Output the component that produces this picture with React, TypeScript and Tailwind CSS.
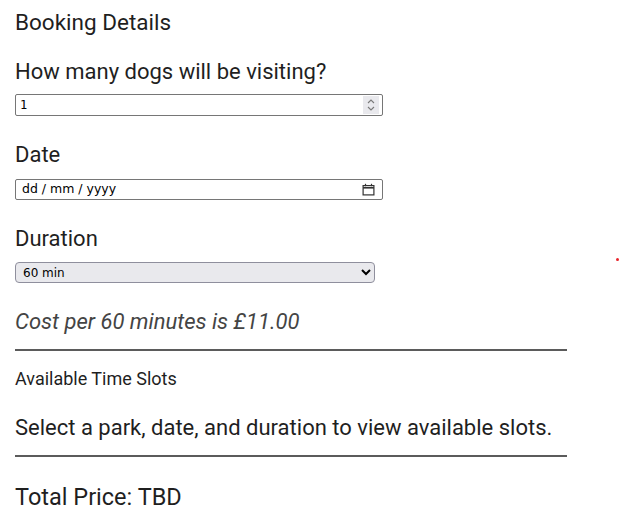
import React from "react";

function CalendarIcon() {
  return (
    <svg width="13" height="13" viewBox="0 0 13 13" fill="none" stroke="#333" strokeWidth="1.2">
      <rect x="1.1" y="2.6" width="10.8" height="9.3" />
      <line x1="1.1" y1="4.8" x2="11.9" y2="4.8" strokeWidth="1.6" />
      <line x1="3.5" y1="0.8" x2="3.5" y2="3.2" />
      <line x1="9.5" y1="0.8" x2="9.5" y2="3.2" />
    </svg>
  );
}

function Spinner() {
  return (
    <div className="pointer-events-none absolute right-[4px] top-[2px] flex h-[18px] w-[16px] items-center justify-center bg-[#e9e9ed]">
      <svg width="10" height="16" viewBox="0 0 10 16" fill="none" stroke="#7a7a7a" strokeWidth="1.1">
        <path d="M2 6 L5 3 L8 6" />
        <path d="M2 10 L5 13 L8 10" />
      </svg>
    </div>
  );
}

export default function App() {
  return (
    <div className="relative min-h-[528px] bg-white px-[15px] font-['Roboto',sans-serif] text-[#1f1f1f]">
      <h2 className="pt-[8px] text-[22.5px] leading-[28px]">Booking Details</h2>

      <label className="mt-[20px] block text-[22px] leading-[32px]">How many dogs will be visiting?</label>
      <div className="relative mt-[6px] w-[368px]">
        <input
          type="number"
          defaultValue={1}
          className="block h-[22px] w-full rounded-[2px] border border-[#767676] px-[4px] font-['DejaVu_Sans_Mono',monospace] text-[12px] text-black [&::-webkit-inner-spin-button]:appearance-none"
        />
        <Spinner />
      </div>

      <label className="mt-[23px] block text-[22px] leading-[32px]">Date</label>
      <div className="mt-[8px] flex h-[21px] w-[368px] items-center justify-between rounded-[2px] border border-[#767676] pl-[6px] pr-[7px] font-['DejaVu_Sans',sans-serif] text-[12.5px] text-black">
        <span>dd / mm / yyyy</span>
        <CalendarIcon />
      </div>

      <label className="mt-[23px] block text-[22px] leading-[32px]">Duration</label>
      <select
        defaultValue="60"
        className="mt-[7px] block h-[21px] w-[360px] rounded-[4px] border border-[#8f8f9d] bg-[#e9e9ed] px-[3px] font-['DejaVu_Sans',sans-serif] text-[12px] text-black"
      >
        <option value="30">30 min</option>
        <option value="60">60 min</option>
        <option value="90">90 min</option>
      </select>

      <p className="mt-[23px] text-[22px] italic leading-[32px] text-[#444]">Cost per 60 minutes is £11.00</p>
      <hr className="mt-[11px] w-[552px] border-t-2 border-[#5b5b5b]" />

      <h3 className="mt-[16px] text-[18px] leading-[24px]">Available Time Slots</h3>
      <p className="mt-[21px] text-[22px] leading-[32px]">Select a park, date, and duration to view available slots.</p>
      <hr className="mt-[11px] w-[552px] border-t-2 border-[#5b5b5b]" />

      <p className="mt-[24px] text-[23.5px] leading-[32px]">Total Price: TBD</p>

      <span className="absolute left-[616px] top-[258px] h-[3px] w-[3px] rounded-full bg-[#e8232a]" />
    </div>
  );
}
